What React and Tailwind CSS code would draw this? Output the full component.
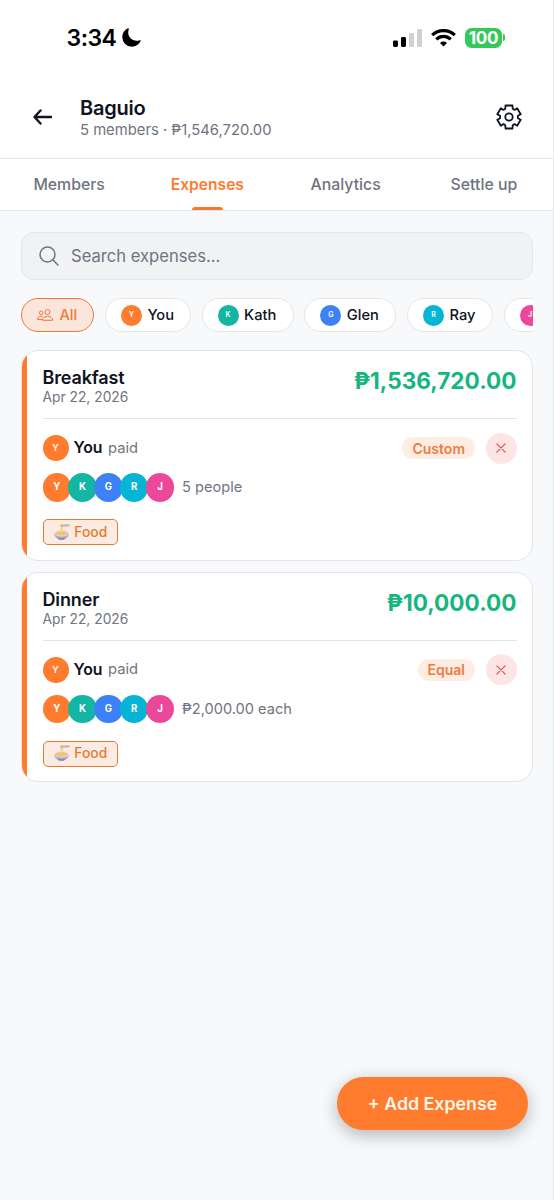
import { IoMoon } from 'react-icons/io5'

const MEMBERS = [
  { name: 'You', initial: 'Y', color: 'bg-[#ff7b2e]', chip: 'w-[86px]' },
  { name: 'Kath', initial: 'K', color: 'bg-[#14b5a3]', chip: 'w-[92px]' },
  { name: 'Glen', initial: 'G', color: 'bg-[#3d81f6]', chip: 'w-[92px]' },
  { name: 'Ray', initial: 'R', color: 'bg-[#06b4d4]', chip: 'w-[86px]' },
  { name: '', initial: 'J', color: 'bg-[#ec489a]', chip: 'w-[86px]' },
]

const EXPENSES = [
  { id: 1, title: 'Breakfast', date: 'Apr 22, 2026', amount: '₱1,536,720.00', split: 'Custom', share: '5 people' },
  { id: 2, title: 'Dinner', date: 'Apr 22, 2026', amount: '₱10,000.00', split: 'Equal', share: '₱2,000.00 each' },
]

const TABS = ['Members', 'Expenses', 'Analytics', 'Settle up']

function StatusBar() {
  return (
    <div className="h-[75px] shrink-0 flex items-center justify-between pl-[66.5px] pr-[48px] text-black">
      <div className="flex items-center gap-[5px]">
        <span className="text-[23px] font-semibold leading-7 tracking-[-0.5px]">3:34</span>
        <IoMoon className="w-[21px] h-[21px]" />
      </div>
      <div className="flex items-center">
        <svg className="w-[29px] h-[18px]" viewBox="0 0 29 18">
          <rect x="0" y="11.5" width="5" height="6.5" rx="1.4" />
          <rect x="8" y="8" width="5" height="10" rx="1.4" />
          <rect x="16" y="4" width="5" height="14" rx="1.4" fill="#d0d0d0" />
          <rect x="24" y="0" width="5" height="18" rx="1.4" fill="#d0d0d0" />
        </svg>
        <svg className="w-[25px] h-[18px] ml-[9px]" viewBox="0 0 25 18" fill="none" stroke="currentColor" strokeWidth="3.2">
          <path d="M1.2 6.2a16 16 0 0 1 22.6 0" />
          <path d="M5.3 10.4a10.2 10.2 0 0 1 14.4 0" />
          <path d="M12.5 17.6l-3.5-3.6a5 5 0 0 1 7 0z" fill="currentColor" stroke="none" />
        </svg>
        <span className="ml-[9px] w-[37px] h-5 rounded-[6.5px] bg-[#34c759] text-white text-[17px] leading-5 font-bold text-center tracking-[-0.3px]">100</span>
        <span className="ml-px w-[2px] h-[7px] rounded-r-full bg-[#34c759]" />
      </div>
    </div>
  )
}

function GearIcon() {
  return (
    <svg className="w-[26px] h-[26px]" viewBox="0 0 26 26" fill="none" stroke="currentColor" strokeWidth="1.8" strokeLinejoin="round">
      <path d="M9.49 1.52H16.51L16.7 4.66L18.54 5.91L21.18 4.22L24.69 10.3L21.91 11.75V14.25L24.69 15.7L21.18 21.78L18.54 20.09L16.7 21.34L16.51 24.48H9.49L9.3 21.34L7.46 20.09L4.82 21.78L1.31 15.7L4.09 14.25V11.75L1.31 10.3L4.82 4.22L7.46 5.91L9.3 4.66Z" />
      <circle cx="13" cy="13" r="3.7" />
    </svg>
  )
}

function Header() {
  return (
    <div className="h-[84px] shrink-0 flex items-center pl-[33px] pr-[31px] border-b border-[#e2e4ea]">
      <svg className="w-5 h-4" viewBox="0 0 20 16" fill="none" stroke="currentColor" strokeWidth="2.4" strokeLinecap="round" strokeLinejoin="round">
        <path d="M18 8H1.5M7.5 1.5L1.5 8L7.500 14.5" />
      </svg>
      <div className="ml-[27px] flex-1 pt-[3px]">
        <h1 className="text-[20px] leading-[24px] font-semibold tracking-[-0.25px]">Baguio</h1>
        <p className="text-[14.8px] leading-5 text-[#6f7480]">5 members · ₱1,546,720.00</p>
      </div>
      <GearIcon />
    </div>
  )
}

function Tabs() {
  return (
    <div className="h-[52px] shrink-0 grid grid-cols-4 border-b border-[#e2e4ea]">
      {TABS.map((tab) => (
        <div key={tab} className="flex flex-col items-center justify-between pt-[14.5px]">
          <span className={tab === 'Expenses' ? 'text-[15.6px] leading-[22px] font-semibold text-[#ff7b2e]' : 'text-[15.8px] leading-[22px] font-medium text-[#6f7480]'}>
            {tab}
          </span>
          {tab === 'Expenses' && <span className="w-[31px] h-[3px] rounded-t-sm bg-[#f37735]" />}
        </div>
      ))}
    </div>
  )
}

function Filters() {
  return (
    <div className="mt-[18px] flex gap-[10.7px] overflow-hidden">
      <div className="w-[73.7px] h-[34px] shrink-0 flex items-center justify-center gap-[6px] rounded-full border-[1.5px] border-[#f2773b] bg-[#fce6dc] text-[#f2773b]">
        <svg className="w-4 h-3" viewBox="0 0 16 12" fill="none" stroke="currentColor" strokeLinejoin="round">
          <circle cx="10.5" cy="3" r="2.5" />
          <circle cx="4.2" cy="3.8" r="1.8" />
          <path d="M5.5 11.3c0-2.6 2-4 5-4s5 1.4 5 4z" />
          <path d="M5.6 7.6c-3-.8-5 .5-5.1 2.9h4.6" />
        </svg>
        <span className="text-[14.7px] font-medium">All</span>
      </div>
      {MEMBERS.map((m) => (
        <div key={m.initial} className={`h-[34px] shrink-0 flex items-center gap-[5.5px] pl-[15px] rounded-full border border-[#e4e6ea] bg-white ${m.chip}`}>
          <span className={`w-[21px] h-[21px] rounded-full flex items-center justify-center text-white text-[7px] font-semibold ${m.color}`}>
            {m.initial}
          </span>
          {m.name && <span className="text-[14.7px] font-medium">{m.name}</span>}
        </div>
      ))}
    </div>
  )
}

function NoodleBowl() {
  return (
    <svg className="w-[17px] h-[17px]" viewBox="0 0 17 17" fill="none">
      <path d="M1 9.5c.3 3.5 3 6 7.5 6s7.2-2.5 7.5-6z" fill="#b9b0c8" />
      <path d="M4 13.3c2.5.8 6.5.8 9 0l-2 2.4H6z" fill="#8f86a8" />
      <ellipse cx="8.5" cy="9.5" rx="7.5" ry="2.9" fill="#ddd7e0" />
      <ellipse cx="8.5" cy="9.2" rx="6" ry="2.1" fill="#f3c36d" />
      <path d="M8 1.5v7M9.5 1.5v7" stroke="#ecd48e" />
      <path d="M7.5 1H16.5M7.5 2.2L16.5 1.8" stroke="#b5a070" strokeWidth=".8" />
    </svg>
  )
}

function ExpenseCard({ expense }) {
  return (
    <div className="h-[210.5px] shrink-0 flex rounded-[17px] border border-[#e3e5e9] bg-white overflow-hidden">
      <div className="w-[5px] bg-[#ff7b2e]" />
      <div className="flex-1 pl-4 pr-[15.5px]">
        <div className="h-[68px] flex justify-between border-b border-[#e3e5e9] pt-[15px]">
          <div className="pt-px">
            <h2 className="text-[18px] leading-[22px] font-semibold tracking-[-0.15px]">{expense.title}</h2>
            <p className="text-[13.8px] leading-[17px] text-[#6f7480]">{expense.date}</p>
          </div>
          <span className="text-[22.6px] leading-[30px] font-bold text-[#17b67f]">{expense.amount}</span>
        </div>

        <div className="mt-[13px] h-8 flex items-center">
          <span className="w-[26px] h-[26px] rounded-full bg-[#ff7b2e] flex items-center justify-center text-white text-[9px] font-semibold">Y</span>
          <span className="ml-[5px] text-[15.8px] font-semibold">You</span>
          <span className="ml-[5.5px] text-[14.7px] text-[#6f7480]">paid</span>
          <span className="ml-auto h-[22px] px-[10px] flex items-center rounded-full bg-[#ffece2] text-[14px] font-semibold text-[#ee7c43]">{expense.split}</span>
          <span className="ml-[10.5px] w-[31px] h-[31px] rounded-full bg-[#fde4e5] flex items-center justify-center text-[#e5484d]">
            <svg className="w-[10px] h-[10px]" viewBox="0 0 10 10" fill="none" stroke="currentColor" strokeWidth="1.1" strokeLinecap="round">
              <path d="M.8 .8l8.4 8.4M9.2 .8L.8 9.2" />
            </svg>
          </span>
        </div>

        <div className="mt-[9px] h-[29px] flex items-center">
          {MEMBERS.map((m) => (
            <span key={m.initial} className={`w-[28.5px] h-[28.5px] -mr-[2.7px] rounded-full flex items-center justify-center text-white text-[9.7px] font-bold ${m.color}`}>
              {m.initial}
            </span>
          ))}
          <span className="ml-[10.5px] pt-px text-[14.6px] text-[#6f7480]">{expense.share}</span>
        </div>

        <div className="mt-[17px] w-[75.5px] h-[26px] flex items-center justify-center gap-1 rounded-[5px] border-[1.5px] border-[#e9782d] bg-[#fcebe2]">
          <NoodleBowl />
          <span className="text-[13.8px] font-medium text-[#e9782d]">Food</span>
        </div>
      </div>
    </div>
  )
}

export default function App() {
  return (
    <div className="relative w-full h-[1200px] flex flex-col overflow-hidden bg-white border-r border-[#e8eaee] font-['Inter',sans-serif] text-[#0f1322]">
      <StatusBar />
      <Header />
      <Tabs />
      <div className="flex-1 bg-[#f8f9fb] pl-[20.5px] pr-[20px] pt-[20.5px]">
        <div className="h-[48.5px] flex items-center rounded-[13px] border border-[#e4e6ea] bg-[#f1f2f4] pl-[17.5px] text-[#6f7480]">
          <svg className="w-5 h-5" viewBox="0 0 20 20" fill="none" stroke="currentColor" strokeWidth="1.5" strokeLinecap="round">
            <circle cx="8.5" cy="8.5" r="7.5" />
            <path d="M14 14l5 5" />
          </svg>
          <span className="ml-3 pt-px text-[16.6px]">Search expenses...</span>
        </div>
        <Filters />
        <div className="mt-[18px] flex flex-col gap-[11px]">
          {EXPENSES.map((e) => (
            <ExpenseCard key={e.id} expense={e} />
          ))}
        </div>
      </div>

      {/* Floating action */}
      <button className="absolute left-[337px] top-[1077px] w-[191px] h-[53px] pt-px rounded-full bg-[#ff7b2e] text-[#fff4e6] text-[17.8px] font-semibold shadow-[0_5px_18px_rgba(0,0,0,0.28)]">
        + Add Expense
      </button>
    </div>
  )
}
